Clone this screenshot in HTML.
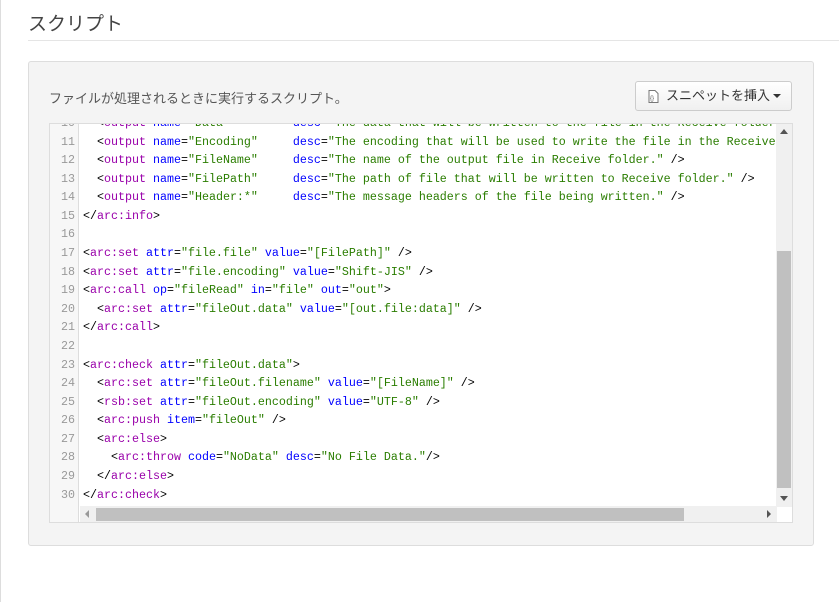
<!DOCTYPE html>
<html><head><meta charset="utf-8">
<style>
body{margin:0;width:839px;height:602px;background:#fff;position:relative;overflow:hidden;font-family:"Liberation Sans","Noto Sans CJK JP",sans-serif}
.lb{position:absolute;left:0;top:0;width:1px;height:602px;background:#ddd}
h1{position:absolute;left:28px;top:9px;margin:0;font-size:19px;font-weight:normal;color:#444}
.hr{position:absolute;left:28px;top:40px;width:811px;height:1px;background:#e5e5e5}
.panel{position:absolute;left:28px;top:61px;width:784px;height:483px;background:#f4f4f4;border:1px solid #ddd;border-radius:3px}
.desc{position:absolute;left:49px;top:88px;font-size:13px;color:#555}
.btn{position:absolute;left:635px;top:81px;width:157px;height:30px;box-sizing:border-box;border:1px solid #ccc;border-radius:3px;background:linear-gradient(#fff,#f0f0f0);font-size:13px;color:#333;line-height:28px}
.code{position:absolute;left:49px;top:123px;width:744px;height:400px;box-sizing:border-box;border:1px solid #ddd;background:#fff;overflow:hidden}
.gut{position:absolute;left:0;top:0;width:28px;height:400px;background:#f7f7f7;border-right:1px solid #ddd}
.lines{position:absolute;left:0;top:-10px;font-family:"Liberation Mono",monospace;font-size:11.67px;line-height:18.58px;white-space:pre}
.ln{display:inline-block;width:25px;text-align:right;color:#999;margin-right:8px}
.t{color:#90a}.a{color:#00f}.s{color:#2a7d00}
.vs{position:absolute;right:0;top:0;width:16px;height:383px;background:#f0f0f0}
.vt{position:absolute;left:1px;top:127px;width:14px;height:237px;background:#c0c0c0}
.hs{position:absolute;left:30px;bottom:0;width:697px;height:16px;background:#f0f0f0}
.ht{position:absolute;left:16px;top:2px;width:588px;height:13px;background:#c0c0c0}
</style></head><body>
<div class="lb"></div>
<h1>スクリプト</h1>
<div class="hr"></div>
<div class="panel"></div>
<div class="desc">ファイルが処理されるときに実行するスクリプト。</div>
<div class="btn"><svg style="position:absolute;left:12px;top:8px" width="11" height="13" viewBox="0 0 11 13"><path d="M1 .5h6l3 3V12.5H1z" fill="#fff" stroke="#777"/><text x="2" y="10" font-size="6" fill="#555" font-family="Liberation Sans">{}</text></svg><span style="position:absolute;left:30px;top:0">スニペットを挿入</span><span style="position:absolute;left:137px;top:12px;border-left:4px solid transparent;border-right:4px solid transparent;border-top:4px solid #333"></span></div>
<div class="code">
<div class="gut"></div>
<div class="lines"><span class="ln">10</span>  &lt;<span class="t">output</span> <span class="a">name</span>=<span class="s">"Data"</span>         <span class="a">desc</span>=<span class="s">"The data that will be written to the file in the Receive folder</span>
<span class="ln">11</span>  &lt;<span class="t">output</span> <span class="a">name</span>=<span class="s">"Encoding"</span>     <span class="a">desc</span>=<span class="s">"The encoding that will be used to write the file in the Receive</span>
<span class="ln">12</span>  &lt;<span class="t">output</span> <span class="a">name</span>=<span class="s">"FileName"</span>     <span class="a">desc</span>=<span class="s">"The name of the output file in Receive folder."</span> /&gt;
<span class="ln">13</span>  &lt;<span class="t">output</span> <span class="a">name</span>=<span class="s">"FilePath"</span>     <span class="a">desc</span>=<span class="s">"The path of file that will be written to Receive folder."</span> /&gt;
<span class="ln">14</span>  &lt;<span class="t">output</span> <span class="a">name</span>=<span class="s">"Header:*"</span>     <span class="a">desc</span>=<span class="s">"The message headers of the file being written."</span> /&gt;
<span class="ln">15</span>&lt;/<span class="t">arc:info</span>&gt;
<span class="ln">16</span>
<span class="ln">17</span>&lt;<span class="t">arc:set</span> <span class="a">attr</span>=<span class="s">"file.file"</span> <span class="a">value</span>=<span class="s">"[FilePath]"</span> /&gt;
<span class="ln">18</span>&lt;<span class="t">arc:set</span> <span class="a">attr</span>=<span class="s">"file.encoding"</span> <span class="a">value</span>=<span class="s">"Shift-JIS"</span> /&gt;
<span class="ln">19</span>&lt;<span class="t">arc:call</span> <span class="a">op</span>=<span class="s">"fileRead"</span> <span class="a">in</span>=<span class="s">"file"</span> <span class="a">out</span>=<span class="s">"out"</span>&gt;
<span class="ln">20</span>  &lt;<span class="t">arc:set</span> <span class="a">attr</span>=<span class="s">"fileOut.data"</span> <span class="a">value</span>=<span class="s">"[out.file:data]"</span> /&gt;
<span class="ln">21</span>&lt;/<span class="t">arc:call</span>&gt;
<span class="ln">22</span>
<span class="ln">23</span>&lt;<span class="t">arc:check</span> <span class="a">attr</span>=<span class="s">"fileOut.data"</span>&gt;
<span class="ln">24</span>  &lt;<span class="t">arc:set</span> <span class="a">attr</span>=<span class="s">"fileOut.filename"</span> <span class="a">value</span>=<span class="s">"[FileName]"</span> /&gt;
<span class="ln">25</span>  &lt;<span class="t">rsb:set</span> <span class="a">attr</span>=<span class="s">"fileOut.encoding"</span> <span class="a">value</span>=<span class="s">"UTF-8"</span> /&gt;
<span class="ln">26</span>  &lt;<span class="t">arc:push</span> <span class="a">item</span>=<span class="s">"fileOut"</span> /&gt;
<span class="ln">27</span>  &lt;<span class="t">arc:else</span>&gt;
<span class="ln">28</span>    &lt;<span class="t">arc:throw</span> <span class="a">code</span>=<span class="s">"NoData"</span> <span class="a">desc</span>=<span class="s">"No File Data."</span>/&gt;
<span class="ln">29</span>  &lt;/<span class="t">arc:else</span>&gt;
<span class="ln">30</span>&lt;/<span class="t">arc:check</span>&gt;</div>
<div class="vs"><div class="vt"></div><span style="position:absolute;left:4px;top:5px;border-left:4px solid transparent;border-right:4px solid transparent;border-bottom:5px solid #555"></span><span style="position:absolute;left:4px;top:372px;border-left:4px solid transparent;border-right:4px solid transparent;border-top:5px solid #555"></span></div>
<div class="hs"><div class="ht"></div><span style="position:absolute;left:5px;top:4px;border-top:4px solid transparent;border-bottom:4px solid transparent;border-right:4px solid #999"></span><span style="position:absolute;left:687px;top:4px;border-top:4px solid transparent;border-bottom:4px solid transparent;border-left:4px solid #555"></span></div>
</div>
</body></html>
